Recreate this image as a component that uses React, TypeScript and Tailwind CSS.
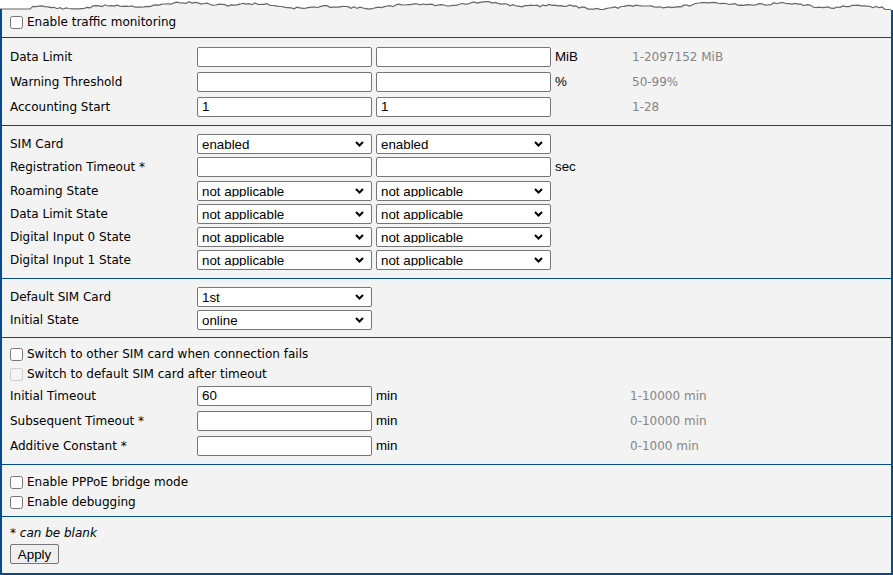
import React from 'react';

const BLUE = 'border-[#0a4a8a]';

// --- torn paper edge along the top ---
const tornPoints = (() => {
  const pts: string[] = [];
  let seed = 11;
  const rnd = () => {
    seed = (seed * 9301 + 49297) % 233280;
    return seed / 233280;
  };
  for (let x = 0; x <= 893; x += 3) {
    let y = 5.6 + 2.0 * Math.sin(x / 43) + 1.3 * Math.sin(x / 12 + 2) + (rnd() - 0.5) * 2.0;
    if (x < 33) y = 9;
    if (x >= 885) y = 10.5;
    y = Math.max(1.5, Math.min(9.5, y));
    pts.push(`${x},${y.toFixed(1)}`);
  }
  return pts;
})();

function TornEdge() {
  return (
    <svg width="893" height="11" viewBox="0 0 893 11" className="block">
      <rect x="0" y="0" width="893" height="11" fill="#ffffff" />
      <polygon points={[...tornPoints, '893,11', '0,11'].join(' ')} fill="#f3f3f3" />
      <polyline points={tornPoints.join(' ')} fill="none" stroke="#666" strokeWidth="1.2" />
      <rect x="0" y="9" width="2" height="2" fill="#0a4a8a" />
      <rect x="891" y="10" width="2" height="1" fill="#0a4a8a" />
    </svg>
  );
}

const ctrlFont = "font-['Liberation_Sans',Arial,sans-serif] text-[13.33px]";

function Label({ children }: { children: React.ReactNode }) {
  return <div className="w-[187px] shrink-0">{children}</div>;
}

function TextInput({ value = '' }: { value?: string }) {
  return (
    <input
      type="text"
      defaultValue={value}
      className={`w-[175px] h-[20px] shrink-0 border border-[#767676] rounded-[2px] bg-white px-[4px] text-black ${ctrlFont}`}
    />
  );
}

function Select({ value }: { value: string }) {
  return (
    <div className="relative w-[175px] h-[20px] shrink-0">
      <select
        defaultValue={value}
        className={`appearance-none w-full h-full border border-[#767676] rounded-[2px] bg-white pl-[4px] pr-[20px] pb-[3px] text-black ${ctrlFont}`}
      >
        <option>{value}</option>
      </select>
      <svg
        width="9"
        height="6"
        viewBox="0 0 9 6"
        className="absolute right-[8px] top-[7px] pointer-events-none"
      >
        <path d="M1 1 L4.5 4.5 L8 1" fill="none" stroke="#000" strokeWidth="2" />
      </svg>
    </div>
  );
}

function Unit({ children, w }: { children?: React.ReactNode; w: string }) {
  return <div className={`${w} shrink-0 pl-[4px] text-black ${ctrlFont}`}>{children}</div>;
}

function Hint({ children }: { children: React.ReactNode }) {
  return <div className="text-[#858585]">{children}</div>;
}

function Check({ label, disabled }: { label: string; disabled?: boolean }) {
  return (
    <label className="flex items-center h-[20px] pt-[2px] gap-[4px]">
      <input type="checkbox" disabled={disabled} className="m-0 w-[13px] h-[13px]" />
      <span>{label}</span>
    </label>
  );
}

function Section({ children, className = '', last }: { children: React.ReactNode; className?: string; last?: boolean }) {
  return <div className={`pl-[8px] ${last ? '' : `border-b ${BLUE}`} ${className}`}>{children}</div>;
}

const stateRows = ['Roaming State', 'Data Limit State', 'Digital Input 0 State', 'Digital Input 1 State'];

export default function App() {
  return (
    <div className="w-[893px] h-[575px] bg-white font-['DejaVu_Sans',Verdana,sans-serif] text-[12px] text-black">
      <TornEdge />
      <div className={`bg-[#f3f3f3] border-l-2 border-r-2 border-b-2 ${BLUE}`}>
        {/* traffic monitoring */}
        <Section className="pb-[6px]">
          <Check label="Enable traffic monitoring" />
        </Section>

        <Section className="pt-[6px] pb-[6px]">
          <div className="flex items-center h-[25px]">
            <Label>Data Limit</Label>
            <TextInput />
            <div className="w-[4px]" />
            <TextInput />
            <Unit w="w-[81px]">MiB</Unit>
            <Hint>1-2097152 MiB</Hint>
          </div>
          <div className="flex items-center h-[25px]">
            <Label>Warning Threshold</Label>
            <TextInput />
            <div className="w-[4px]" />
            <TextInput />
            <Unit w="w-[81px]">%</Unit>
            <Hint>50-99%</Hint>
          </div>
          <div className="flex items-center h-[25px]">
            <Label>Accounting Start</Label>
            <TextInput value="1" />
            <div className="w-[4px]" />
            <TextInput value="1" />
            <Unit w="w-[81px]" />
            <Hint>1-28</Hint>
          </div>
        </Section>

        {/* per SIM settings */}
        <Section className="pt-[6px] pb-[7px]">
          <div className="flex items-center h-[23px]">
            <Label>SIM Card</Label>
            <Select value="enabled" />
            <div className="w-[4px]" />
            <Select value="enabled" />
          </div>
          <div className="flex items-center h-[24px]">
            <Label>Registration Timeout *</Label>
            <TextInput />
            <div className="w-[4px]" />
            <TextInput />
            <Unit w="w-[60px]">sec</Unit>
          </div>
          {stateRows.map((r) => (
            <div key={r} className="flex items-center h-[23px]">
              <Label>{r}</Label>
              <Select value="not applicable" />
              <div className="w-[4px]" />
              <Select value="not applicable" />
            </div>
          ))}
        </Section>

        <Section className="pt-[6px] pb-[6px]">
          <div className="flex items-center h-[23px]">
            <Label>Default SIM Card</Label>
            <Select value="1st" />
          </div>
          <div className="flex items-center h-[23px]">
            <Label>Initial State</Label>
            <Select value="online" />
          </div>
        </Section>

        {/* switching */}
        <Section className="pt-[5px] pb-[6px]">
          <Check label="Switch to other SIM card when connection fails" />
          <Check label="Switch to default SIM card after timeout" disabled />
          <div className="flex items-center h-[25px]">
            <Label>Initial Timeout</Label>
            <TextInput value="60" />
            <Unit w="w-[258px]">min</Unit>
            <Hint>1-10000 min</Hint>
          </div>
          <div className="flex items-center h-[25px]">
            <Label>Subsequent Timeout *</Label>
            <TextInput />
            <Unit w="w-[258px]">min</Unit>
            <Hint>0-10000 min</Hint>
          </div>
          <div className="flex items-center h-[25px]">
            <Label>Additive Constant *</Label>
            <TextInput />
            <Unit w="w-[258px]">min</Unit>
            <Hint>0-1000 min</Hint>
          </div>
        </Section>

        <Section className="pt-[6px] pb-[5px]">
          <Check label="Enable PPPoE bridge mode" />
          <Check label="Enable debugging" />
        </Section>

        <Section last className="pt-[5px] pb-[9px]">
          <div className="flex items-center h-[20px] pt-[2px] italic">* can be blank</div>
          <button
            type="button"
            className={`mt-[2px] h-[20px] w-[49px] border border-[#767676] rounded-[2px] bg-[#efefef] text-black ${ctrlFont}`}
          >
            Apply
          </button>
        </Section>
      </div>
    </div>
  );
}
